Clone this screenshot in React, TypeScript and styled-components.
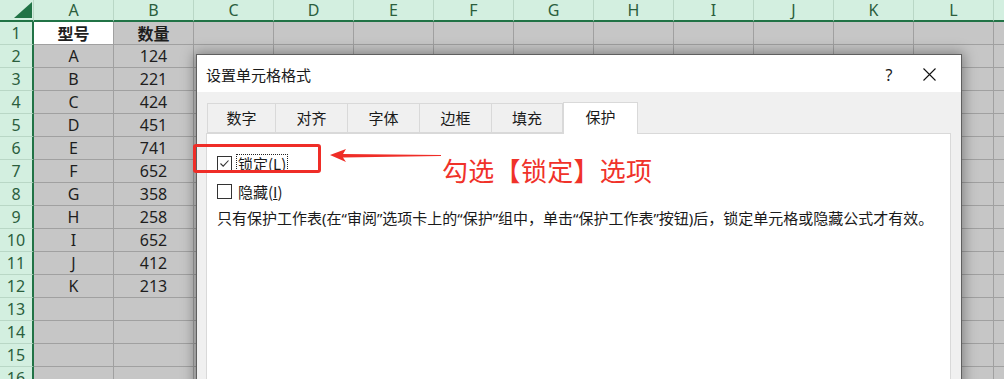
import React from 'react';
import styled, { createGlobalStyle } from 'styled-components';

const GlobalStyle = createGlobalStyle`
  html, body {
    margin: 0;
    padding: 0;
    width: 1004px;
    height: 379px;
    overflow: hidden;
    background: #c6c6c6;
  }
`;

const Screen = styled.div`
  position: relative;
  width: 1004px;
  height: 379px;
  overflow: hidden;
  font-family: "Noto Sans", "Noto Sans CJK SC", sans-serif;
`;

const Sheet = styled.div`
  display: grid;
  grid-template-columns: 34px repeat(12, 80px) 80px;
  grid-template-rows: 22px repeat(16, 23px);
`;

const Corner = styled.div`
  position: relative;
  background: #d3efe0;
  border-right: 1px solid #b9d7c6;
  border-bottom: 2px solid #217346;
`;

const ColHead = styled.div`
  background: #d3efe0;
  border-right: 1px solid #b9d7c6;
  border-bottom: 2px solid #217346;
  color: #2b5e3d;
  font-size: 16px;
  line-height: 20px;
  text-align: center;
`;

const RowHead = styled.div`
  background: #d3efe0;
  border-right: 2px solid #217346;
  border-bottom: 1px solid #b9d7c6;
  color: #2b5e3d;
  font-size: 16px;
  line-height: 22px;
  text-align: center;
`;

const Cell = styled.div<{ $active?: boolean; $bold?: boolean }>`
  background: ${p => (p.$active ? '#ffffff' : '#c6c6c6')};
  border-right: 1px solid #a0a0a0;
  border-bottom: 1px solid #a0a0a0;
  color: #1e1e1e;
  font-size: 16px;
  line-height: 22px;
  font-weight: ${p => (p.$bold ? 700 : 400)};
  font-family: ${p => (p.$bold ? '"Noto Sans CJK SC", sans-serif' : '"Noto Sans", "Noto Sans CJK SC", sans-serif')};
  text-align: center;
  white-space: nowrap;
  overflow: hidden;
`;

const Dialog = styled.div`
  position: absolute;
  left: 196px;
  top: 54px;
  width: 764px;
  height: 340px;
  border: 1px solid #5f5f5f;
  background: #f0f0f0;
  box-shadow: 0 0 12px 2px rgba(0, 0, 0, 0.35);
  display: flex;
  flex-direction: column;
  font-family: "Noto Sans CJK SC", sans-serif;
  color: #1a1a1a;
`;

const TitleBar = styled.div`
  height: 37px;
  background: #ffffff;
  display: flex;
  align-items: center;
  padding-left: 9px;
  font-size: 15px;
`;

const Title = styled.div`
  flex: 1;
  margin-top: 2px;
`;

const TitleButton = styled.div`
  width: 40px;
  display: flex;
  justify-content: center;
  align-items: center;
  font-family: "Noto Sans", sans-serif;
  font-size: 16px;
  margin-top: 2px;
`;

const Body = styled.div`
  flex: 1;
  padding: 9px 10px 0 9px;
  display: flex;
  flex-direction: column;
`;

const TabStrip = styled.div`
  display: flex;
  align-items: flex-end;
  height: 32px;
  padding-left: 1px;
`;

const Tab = styled.div<{ $active?: boolean; $w: number }>`
  width: ${p => p.$w}px;
  height: ${p => (p.$active ? 32 : 30)}px;
  box-sizing: border-box;
  background: ${p => (p.$active ? '#ffffff' : '#f0f0f0')};
  border: 1px solid #d9d9d9;
  border-left-width: ${p => (p.$active ? 1 : 0)}px;
  border-bottom: ${p => (p.$active ? 'none' : '1px solid #d9d9d9')};
  margin-bottom: ${p => (p.$active ? -1 : 0)}px;
  position: relative;
  z-index: ${p => (p.$active ? 2 : 1)};
  display: flex;
  align-items: center;
  justify-content: center;
  font-size: 15px;
  padding-bottom: ${p => (p.$active ? 4 : 2)}px;

  &:first-child {
    border-left-width: 1px;
  }
`;

const Panel = styled.div`
  flex: 1;
  background: #ffffff;
  border: 1px solid #d9d9d9;
  padding: 15px 10px 0 10px;
  display: flex;
  flex-direction: column;
`;

const OptionRow = styled.div`
  display: flex;
  align-items: center;
  height: 28px;
  gap: 5px;
  font-size: 15px;
`;

const Box = styled.span`
  width: 13px;
  height: 13px;
  border: 1px solid #333;
  background: #fff;
  display: flex;
  align-items: center;
  justify-content: center;
`;

const Label = styled.span<{ $focus?: boolean }>`
  outline: ${p => (p.$focus ? '1px dotted #222' : 'none')};
  padding: 0 1px;
  line-height: 17px;
`;

const Key = styled.span`
  text-decoration: underline;
`;

const Note = styled.div`
  font-family: "Noto Sans", "Noto Sans CJK SC", sans-serif;
  font-size: 15px;
  line-height: 26px;
  white-space: nowrap;
`;

const RedBox = styled.div`
  position: absolute;
  left: 193px;
  top: 144px;
  width: 122px;
  height: 23px;
  border: 3px solid #ef2d27;
  border-radius: 3px;
`;

const Arrow = styled.svg`
  position: absolute;
  left: 330px;
  top: 148px;
`;

const Callout = styled.div`
  position: absolute;
  left: 442px;
  top: 152px;
  font-family: "Noto Sans CJK SC", sans-serif;
  font-size: 26px;
  line-height: 36px;
  color: #f0322a;
  letter-spacing: 0.3px;
`;

const cols = ['A', 'B', 'C', 'D', 'E', 'F', 'G', 'H', 'I', 'J', 'K', 'L', 'M'];
const data: [string, string][] = [
  ['A', '124'], ['B', '221'], ['C', '424'], ['D', '451'], ['E', '741'], ['F', '652'],
  ['G', '358'], ['H', '258'], ['I', '652'], ['J', '412'], ['K', '213'],
];
const tabs = [
  { label: '数字', w: 69 },
  { label: '对齐', w: 72 },
  { label: '字体', w: 72 },
  { label: '边框', w: 72 },
  { label: '填充', w: 71 },
  { label: '保护', w: 75, active: true },
];

const App: React.FC = () => {
  const rows = Array.from({ length: 16 }, (_, i) => i + 1);

  return (
    <Screen>
      <GlobalStyle />
      <Sheet>
        <Corner>
          <svg width="18" height="16" style={{ position: 'absolute', right: 1, bottom: 2 }}>
            <polygon points="18,0 18,16 0,16" fill="#217346" />
          </svg>
        </Corner>
        {cols.map(c => (
          <ColHead key={c}>{c}</ColHead>
        ))}
        {rows.map(r => (
          <React.Fragment key={r}>
            <RowHead>{r}</RowHead>
            {cols.map((c, ci) => {
              let text = '';
              if (r === 1 && ci === 0) text = '型号';
              else if (r === 1 && ci === 1) text = '数量';
              else if (r >= 2 && r <= 12 && ci < 2) text = data[r - 2][ci];
              return (
                <Cell key={c} $active={r === 1 && ci === 0} $bold={r === 1}>
                  {text}
                </Cell>
              );
            })}
          </React.Fragment>
        ))}
      </Sheet>

      <Dialog>
        <TitleBar>
          <Title>设置单元格格式</Title>
          <TitleButton>?</TitleButton>
          <TitleButton style={{ marginRight: 12 }}>
            <svg width="13" height="13" viewBox="0 0 13 13">
              <path d="M0.5 0.5 L12.5 12.5 M12.5 0.5 L0.5 12.5" stroke="#111" strokeWidth="1.1" />
            </svg>
          </TitleButton>
        </TitleBar>
        <Body>
          <TabStrip>
            {tabs.map(t => (
              <Tab key={t.label} $w={t.w} $active={t.active}>
                {t.label}
              </Tab>
            ))}
          </TabStrip>
          <Panel>
            <OptionRow>
              <Box>
                <svg width="11" height="11" viewBox="0 0 11 11">
                  <polyline points="1.5,5.5 4.2,8.2 9.5,2.5" fill="none" stroke="#333" strokeWidth="1.1" />
                </svg>
              </Box>
              <Label $focus>
                锁定(<Key>L</Key>)
              </Label>
            </OptionRow>
            <OptionRow>
              <Box />
              <Label>
                隐藏(<Key>I</Key>)
              </Label>
            </OptionRow>
            <Note>
              只有保护工作表(在“审阅”选项卡上的“保护”组中，单击“保护工作表”按钮)后，锁定单元格或隐藏公式才有效。
            </Note>
          </Panel>
        </Body>
      </Dialog>

      <RedBox />
      <Arrow width="112" height="16" viewBox="0 0 112 16">
        <polygon points="0,7 16,1 13,6 111,7 111,8 13,9.5 16,14" fill="#ef2d27" />
      </Arrow>
      <Callout>勾选【锁定】选项</Callout>
    </Screen>
  );
};

export default App;
